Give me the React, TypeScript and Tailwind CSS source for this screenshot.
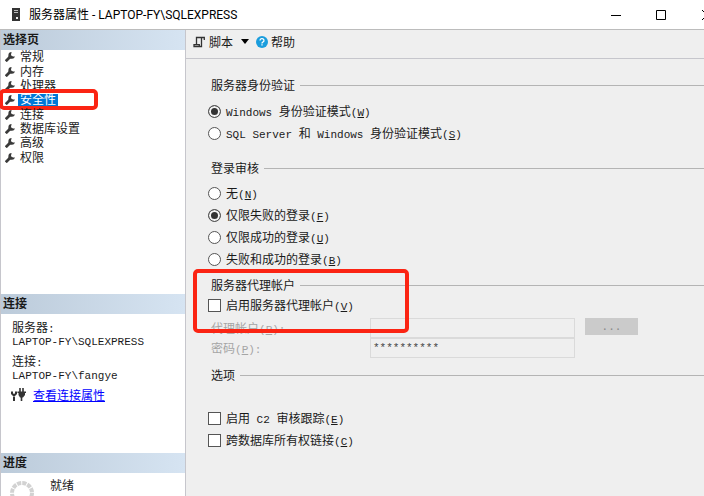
import { ReactNode } from "react";

const pages = ["常规", "内存", "处理器", "安全性", "连接", "数据库设置", "高级", "权限"];

const base = { fontFamily: "'Noto Sans CJK SC', sans-serif" };
const mono = { fontFamily: "'Liberation Mono', monospace" };

function Latin({ children }: { children: ReactNode }) {
  return <span className="text-[11px] leading-[8px]" style={mono}>{children}</span>;
}

function Key({ k }: { k: string }) {
  return <Latin>(<u>{k}</u>)</Latin>;
}

function Wrench() {
  return (
    <svg viewBox="0 0 10 10" className="h-[10px] w-[10px] shrink-0" fill="none">
      <path d="M0.8 9.2 L5.2 4.8" stroke="#3a3a3a" strokeWidth="2.8" />
      <path d="M6.6 0 A3.4 3.4 0 1 0 10 4.4 L8 4.6 L5.9 3.2 Z" fill="#3a3a3a" />
    </svg>
  );
}

function PanelTitle({ children }: { children: ReactNode }) {
  return (
    <h2 className="flex h-5 items-center bg-linear-to-r from-[#bccbda] to-[#d6e4f2] pb-[2px] pl-[2px] text-xs leading-4 font-bold">
      {children}
    </h2>
  );
}

function GroupTitle({ children }: { children: ReactNode }) {
  return (
    <legend className="flex h-4 w-full items-center gap-[5px] pl-[3px] leading-4">
      {children}
      <span className="h-px flex-1 bg-[#b4b4b4]" />
    </legend>
  );
}

function Radio({ name, checked, children }: { name: string; checked?: boolean; children: ReactNode }) {
  return (
    <label className="flex h-[22px] w-fit items-center gap-[5px] whitespace-pre">
      <input
        type="radio"
        name={name}
        defaultChecked={checked}
        className="h-[13px] w-[13px] appearance-none rounded-full border border-[#555] bg-white checked:bg-[#333] checked:shadow-[inset_0_0_0_2px_#f4f4f4]"
      />
      <span>{children}</span>
    </label>
  );
}

function Check({ children }: { children: ReactNode }) {
  return (
    <label className="flex h-[22px] w-fit items-center gap-[5px] whitespace-pre">
      <input type="checkbox" className="h-[13px] w-[13px] appearance-none border border-[#555] bg-white checked:bg-[#333]" />
      <span>{children}</span>
    </label>
  );
}

function TitleBar() {
  return (
    <header
      className="flex h-[29px] shrink-0 items-center overflow-hidden bg-white pl-3"
      style={{ fontFamily: "Roboto, 'Noto Sans CJK SC', sans-serif" }}
    >
      <svg viewBox="0 0 8 13" className="h-[13px] w-2">
        <rect width="8" height="13" fill="#333" />
        <path d="M2 2.5h4M2 4.5h4" stroke="#ddd" strokeWidth="0.8" />
        <rect x="4" y="9" width="2" height="2" fill="#eee" />
      </svg>
      <h1 className="ml-[9px] flex-1 text-xs whitespace-nowrap text-black">服务器属性 - LAPTOP-FY\SQLEXPRESS</h1>
      <div className="-mr-[14px] flex shrink-0">
        <button aria-label="最小化" className="flex w-[45px] justify-center">
          <svg viewBox="0 0 10 10" className="h-[10px] w-[10px]" stroke="#000" fill="none"><path d="M0 5.5h10" /></svg>
        </button>
        <button aria-label="最大化" className="flex w-[45px] justify-center">
          <svg viewBox="0 0 10 10" className="h-[10px] w-[10px]" stroke="#000" fill="none"><path d="M.5.5h9v9h-9z" /></svg>
        </button>
        <button aria-label="关闭" className="ml-[19px] flex w-[16px]">
          <svg viewBox="0 0 10 10" className="h-[10px] w-[10px]" stroke="#000" fill="none"><path d="M0 0l10 10M10 0L0 10" /></svg>
        </button>
      </div>
    </header>
  );
}

function Sidebar() {
  return (
    <aside className="flex w-[186px] shrink-0 flex-col border-x border-[#c6c6cc] bg-white">
      <nav className="flex-1">
        <PanelTitle>选择页</PanelTitle>
        <ul
          className="flex h-[115px] flex-col"
          style={{ fontFamily: "'Liberation Sans', 'Noto Sans CJK SC', sans-serif" }}
        >
          {pages.map((page) => (
            <li key={page} className="relative flex flex-1 items-center gap-[3px] pl-1">
              <Wrench />
              <a href="#" className={page === "安全性" ? "bg-[#0078d7] px-[2px] leading-3 text-white" : "px-[2px] leading-3"}>
                {page}
              </a>
              {page === "安全性" && (
                <span className="absolute -top-1 -left-[2px] h-[21px] w-[99px] rounded-[5px] border-4 border-[#fb2413]" />
              )}
            </li>
          ))}
        </ul>
      </nav>

      <section className="pb-[52px]">
        <PanelTitle>连接</PanelTitle>
        <div className="px-[11px] pt-[6px] leading-[13px]">
          <p>服务器<Latin>:</Latin></p>
          <p><Latin>LAPTOP-FY\SQLEXPRESS</Latin></p>
          <p className="mt-2">连接<Latin>:</Latin></p>
          <p><Latin>LAPTOP-FY\fangye</Latin></p>
          <p className="mt-2 flex items-center gap-[7px]">
            <svg viewBox="0 0 15 13" className="-ml-px h-[13px] w-[15px]" fill="none" stroke="#333">
              <path d="M1 3.5v2L3 7.5L5 5.5v-2M3 7v6" strokeWidth="2" />
              <path d="M9 0v4M12 0v4M10.5 8v5" strokeWidth="1.6" />
              <path d="M6.5 3.5H15v1.4h-1V7L12 9.5H9L7.5 7V4.9h-1z" fill="#333" stroke="none" />
            </svg>
            <a href="#" className="text-[#0000ff] underline">查看连接属性</a>
          </p>
        </div>
      </section>

      <section>
        <PanelTitle>进度</PanelTitle>
        <div className="flex h-[23px] gap-4 overflow-hidden pl-[9px]">
          <svg viewBox="0 0 24 24" className="mt-2 h-6 w-6 shrink-0">
            <circle cx="12" cy="12" r="10" fill="none" stroke="#d2d2d2" strokeWidth="4" strokeDasharray="4.2 1.03" />
          </svg>
          <p className="pt-1 leading-4">就绪</p>
        </div>
      </section>
    </aside>
  );
}

function Toolbar() {
  return (
    <div className="flex h-[29px] items-center border-b border-[#c6c6cc] pb-[5px] pl-[7px]">
      <button className="flex items-center gap-1">
        <svg viewBox="0 0 12 12" className="h-3 w-3" fill="none" stroke="#333" strokeWidth="1.3">
          <path d="M11.3 4V1.5H3.5V8M8.5 1.5v9H1V8.6h5.3v1.9" />
        </svg>
        脚本
        <svg viewBox="0 0 8 5" className="ml-1 h-[5px] w-2"><path d="M0 0h8L4 5z" /></svg>
      </button>
      <button className="ml-[7px] flex items-center gap-[3px]">
        <svg viewBox="0 0 12 12" className="h-3 w-3">
          <circle cx="6" cy="6" r="6" fill="#1a9ddd" />
          <path d="M4 4.5a2 1.8 0 1 1 2.8 1.6Q6 6.5 6 7.4M6 8.3v1.3" fill="none" stroke="#fff" strokeWidth="1.3" />
        </svg>
        帮助
      </button>
    </div>
  );
}

export default function App() {
  return (
    <div className="flex min-h-screen flex-col bg-[#efefef] text-xs text-[#1a1a1a]" style={base}>
      <TitleBar />
      <div className="flex flex-1 border-t border-[#bcbcbc]">
        <Sidebar />
        <main className="min-w-0 flex-1">
          <Toolbar />
          <form className="pt-[18px] pl-[22px]">
            <fieldset>
              <GroupTitle>服务器身份验证</GroupTitle>
              <div className="pt-[7px]">
                <Radio name="auth" checked><Latin>Windows </Latin>身份验证模式<Key k="W" /></Radio>
                <Radio name="auth"><Latin>SQL Server </Latin>和<Latin> Windows </Latin>身份验证模式<Key k="S" /></Radio>
              </div>
            </fieldset>

            <fieldset className="mt-4">
              <GroupTitle>登录审核</GroupTitle>
              <div className="pt-[6px]">
                <Radio name="audit">无<Key k="N" /></Radio>
                <Radio name="audit" checked>仅限失败的登录<Key k="F" /></Radio>
                <Radio name="audit">仅限成功的登录<Key k="U" /></Radio>
                <Radio name="audit">失败和成功的登录<Key k="B" /></Radio>
              </div>
            </fieldset>

            <div className="relative mt-[7px]">
              <fieldset>
                <GroupTitle>服务器代理帐户</GroupTitle>
                <div className="pt-px">
                  <Check>启用服务器代理帐户<Key k="V" /></Check>
                </div>
                <div className="mt-[2px] grid grid-cols-[162px_205px_63px] text-[#a5a5a5]">
                  <label htmlFor="proxy" className="pl-[3px] leading-5">代理帐户<Key k="R" /><Latin>:</Latin></label>
                  <input id="proxy" disabled className="h-5 border border-[#dadada] px-1" />
                  <button type="button" disabled className="ml-[10px] h-[17px] bg-[#cbcbcb] text-[11px] leading-4 text-[#888]" style={mono}>...</button>
                  <label htmlFor="password" className="pl-[3px] leading-5">密码<Key k="P" /><Latin>:</Latin></label>
                  <input id="password" disabled defaultValue="**********" className="h-5 border border-[#dadada] px-[2px] text-[11px] text-[#444]" style={mono} />
                </div>
              </fieldset>
              <span className="pointer-events-none absolute -top-2 -left-[15px] h-[64px] w-[216px] rounded-[5px] border-4 border-[#fb2413]" />
            </div>

            <fieldset className="mt-[9px]">
              <GroupTitle>选项</GroupTitle>
              <div className="pt-6">
                <Check>启用<Latin> C2 </Latin>审核跟踪<Key k="E" /></Check>
                <Check>跨数据库所有权链接<Key k="C" /></Check>
              </div>
            </fieldset>
          </form>
        </main>
      </div>
    </div>
  );
}
